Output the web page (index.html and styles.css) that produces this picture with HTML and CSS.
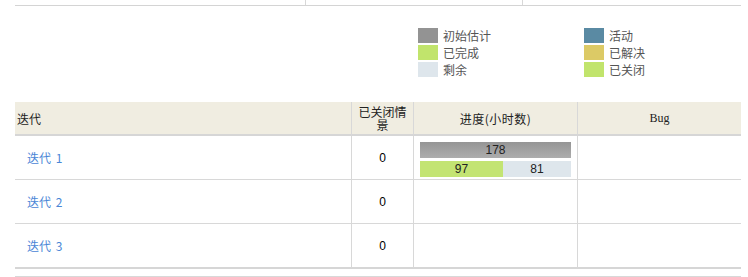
FILE: index.html
```html
<!DOCTYPE html>
<html lang="zh">
<head>
<meta charset="utf-8">
<title>迭代</title>
<link rel="stylesheet" href="styles.css">
</head>
<body>
<div class="prev">
  <div class="prev-cell c1"></div>
  <div class="prev-cell c2"></div>
  <div class="prev-cell c3"></div>
</div>

<div class="legend">
  <div class="legend-item"><span class="sw sw-est"></span>初始估计</div>
  <div class="legend-item"><span class="sw sw-active"></span>活动</div>
  <div class="legend-item"><span class="sw sw-done"></span>已完成</div>
  <div class="legend-item"><span class="sw sw-resolved"></span>已解决</div>
  <div class="legend-item"><span class="sw sw-remain"></span>剩余</div>
  <div class="legend-item"><span class="sw sw-closed"></span>已关闭</div>
</div>

<div class="grid">
  <div class="th th-first">迭代</div>
  <div class="th th-center">已关闭情景</div>
  <div class="th th-center th-progress">进度(小时数)</div>
  <div class="th th-center th-bug">Bug</div>

  <div class="td td-first"><a href="#" class="link">迭代 1</a></div>
  <div class="td td-center">0</div>
  <div class="td td-bars">
    <div class="bar bar-total">178</div>
    <div class="bar-split">
      <div class="bar bar-done" style="width:83px">97</div>
      <div class="bar bar-remain">81</div>
    </div>
  </div>
  <div class="td"></div>

  <div class="td td-first"><a href="#" class="link">迭代 2</a></div>
  <div class="td td-center">0</div>
  <div class="td"></div>
  <div class="td"></div>

  <div class="td td-first last"><a href="#" class="link">迭代 3</a></div>
  <div class="td td-center last">0</div>
  <div class="td last"></div>
  <div class="td last"></div>
</div>

<div class="footer"></div>
</body>
</html>
```

FILE: styles.css
```css
html, body {
  margin: 0;
  padding: 0;
  background: #ffffff;
}

body {
  font-family: "Noto Sans CJK SC", "Liberation Sans", sans-serif;
  font-size: 12px;
  color: #222;
}

.prev {
  display: flex;
  margin-left: 15px;
  width: 726px;
  height: 5px;
  border-bottom: 1px solid #d4d4d4;
}

.prev-cell.c1 {
  width: 290px;
  border-right: 1px solid #d8d8d8;
}

.prev-cell.c2 {
  width: 216px;
  border-right: 1px solid #d8d8d8;
}

.prev-cell.c3 {
  flex: 1;
}

.legend {
  display: grid;
  grid-template-columns: 166px 140px;
  row-gap: 2px;
  margin-left: 418px;
  margin-top: 22px;
}

.legend-item {
  display: flex;
  align-items: center;
  gap: 5px;
  height: 15px;
  line-height: 15px;
  font-size: 12px;
  color: #555;
}

.sw {
  display: inline-block;
  width: 20px;
  height: 15px;
  flex: none;
}

.sw-est { background: #939393; }
.sw-active { background: #5a8aa3; }
.sw-done { background: #c1e46c; }
.sw-resolved { background: #dcca66; }
.sw-remain { background: #dee6ec; }
.sw-closed { background: #c1e46c; }

.grid {
  display: grid;
  grid-template-columns: 336px 62px 164px 164px;
  margin-left: 15px;
  margin-top: 25px;
  width: 726px;
}

.th {
  height: 32px;
  background: #f0ede1;
  border-bottom: 2px solid #d6d6d6;
  border-left: 1px solid #d8d8d8;
  display: flex;
  align-items: center;
  color: #222;
  font-size: 12px;
  line-height: 13px;
  box-sizing: content-box;
}

.th-first {
  border-left: none;
  padding-left: 2px;
}

.th-center {
  justify-content: center;
  text-align: center;
  padding: 0 5px;
}

.th-progress {
  letter-spacing: 0.5px;
}

.th-bug {
  font-family: "Liberation Serif", "DejaVu Serif", serif;
  font-size: 12px;
}

.td {
  height: 43px;
  border-left: 1px solid #d8d8d8;
  border-bottom: 1px solid #d8d8d8;
  display: flex;
  align-items: center;
  box-sizing: content-box;
}

.td.last {
  border-bottom: 2px solid #d6d6d6;
}

.td-first {
  border-left: none;
  padding-left: 12px;
}

.td-center {
  justify-content: center;
  font-family: "Liberation Sans", sans-serif;
  color: #000;
}

.link {
  color: #4a86d6;
  text-decoration: none;
  font-size: 12px;
  word-spacing: 2px;
}

.td-bars {
  flex-direction: column;
  align-items: stretch;
  justify-content: flex-start;
  gap: 3px;
  padding: 6px 6px 0 6px;
  height: 37px;
}

.bar {
  height: 16px;
  line-height: 16px;
  text-align: center;
  font-family: "Liberation Sans", sans-serif;
  font-size: 12px;
  color: #222;
}

.bar-total {
  background: linear-gradient(#959595, #adadad);
}

.bar-split {
  display: flex;
}

.bar-done {
  background: #c3e473;
  flex: none;
}

.bar-remain {
  background: #dee6ec;
  flex: 1;
}

.footer {
  margin-left: 15px;
  margin-top: 7px;
  width: 726px;
  border-top: 1px solid #d8d8d8;
}
```
